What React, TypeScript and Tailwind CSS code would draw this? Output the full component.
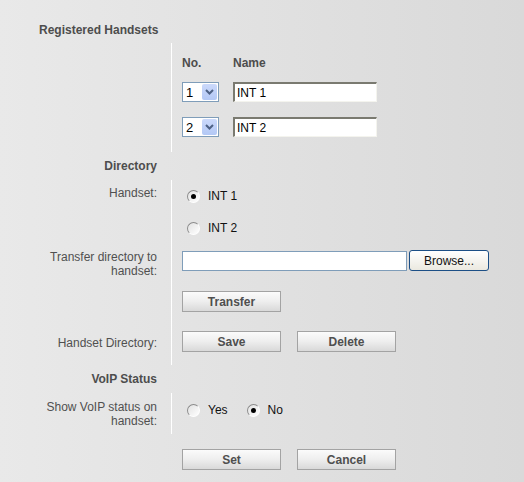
import React from 'react';

const FONT = { fontFamily: '"Liberation Sans", Arial, sans-serif' };

function Divider({ children, className = '' }: { children?: React.ReactNode; className?: string }) {
  return <div className={`border-l border-white pl-[10px] ${className}`}>{children}</div>;
}

function Btn({ label }: { label: string }) {
  return (
    <button className="h-[21px] w-[99px] border border-[#a3a3a3] bg-linear-to-b from-[#fbfbfb] via-[#eeeeee] to-[#d9d9d9] text-[12px] font-bold leading-none text-[#4f4f4f]">
      {label}
    </button>
  );
}

function Radio({ checked }: { checked?: boolean }) {
  return (
    <span className="flex h-[13px] w-[13px] items-center justify-center rounded-full border border-t-[#8c8c8c] border-l-[#8c8c8c] border-b-white border-r-white bg-linear-to-br from-[#e2e2e2] to-white">
      {checked && <span className="h-[5px] w-[5px] rounded-full bg-black" />}
    </span>
  );
}

function NoSelect({ value }: { value: string }) {
  return (
    <div className="flex h-[20px] w-[37px] items-center justify-between border border-[#7f9db9] bg-white pl-[3px] pr-[1px]">
      <span className="text-[13px] leading-none text-black">{value}</span>
      <span className="flex h-[16px] w-[15px] items-center justify-center rounded-[2px] bg-linear-to-b from-[#cbd9fb] to-[#b3c8f5]">
        <svg width="9" height="6" viewBox="0 0 9 6">
          <path d="M1 1 L4.5 4.5 L8 1" fill="none" stroke="#4d6185" strokeWidth="2" />
        </svg>
      </span>
    </div>
  );
}

function NameInput({ value }: { value: string }) {
  return (
    <div className="flex h-[20px] w-[144px] items-center border-t-2 border-l-2 border-b border-r border-t-[#7a7a70] border-l-[#7a7a70] border-b-[#f4f4ee] border-r-[#f4f4ee] bg-white pl-[2px] text-[12px] text-black">
      {value}
    </div>
  );
}

const rows = [
  { no: '1', name: 'INT 1' },
  { no: '2', name: 'INT 2' },
];

export default function App() {
  return (
    <div className="min-h-[482px] w-[524px] bg-linear-to-r from-[#e9e9e9] to-[#d9d9d9] text-[12px] text-[#505050]" style={FONT}>
      <div className="pt-[23px] pl-[39px] font-bold text-[#4d4d4d] leading-[14px]">Registered Handsets</div>

      <div className="mt-[6px] grid grid-cols-[171px_1fr]">
        {/* Registered handsets */}
        <div />
        <Divider className="pt-[13px] pb-[15px]">
          <div className="flex h-[14px] items-center font-bold leading-[14px] text-[#4d4d4d]">
            <span className="w-[51px]">No.</span>
            <span>Name</span>
          </div>
          <div className="mt-[12px] flex flex-col gap-[15px]">
            {rows.map(r => (
              <div key={r.no} className="flex items-center gap-[14px]">
                <NoSelect value={r.no} />
                <NameInput value={r.name} />
              </div>
            ))}
          </div>
        </Divider>

        {/* Directory */}
        <div className="flex h-[28px] items-center justify-end pr-[14px] font-bold text-[#4d4d4d]">Directory</div>
        <div />

        <div className="pt-[6px] pr-[14px] text-right leading-[14px]">Handset:</div>
        <Divider className="flex h-[32px] items-center">
          <span className="ml-[5px]"><Radio checked /></span>
          <span className="ml-[8px] text-[#111]">INT 1</span>
        </Divider>

        <div />
        <Divider className="flex h-[32px] items-center">
          <span className="ml-[5px]"><Radio /></span>
          <span className="ml-[8px] text-[#111]">INT 2</span>
        </Divider>

        <div className="pt-[6px] pr-[14px] pb-[4px] text-right leading-[14px]">
          Transfer directory to
          <br />
          handset:
        </div>
        <Divider className="pt-[6px]">
          <div className="flex items-center gap-[2px]">
            <div className="h-[20px] w-[225px] border border-[#7f9db9] bg-white" />
            <button className="h-[21px] w-[80px] rounded-[3px] border border-[#1c4f86] bg-linear-to-b from-white to-[#ebe9e0] text-[12px] leading-none text-[#111]">
              Browse...
            </button>
          </div>
        </Divider>

        <div />
        <Divider className="pt-[9px]">
          <Btn label="Transfer" />
        </Divider>

        <div className="pt-[24px] pr-[14px] text-right leading-[14px]">Handset Directory:</div>
        <Divider className="flex gap-[16px] pt-[19px] pb-[13px]">
          <Btn label="Save" />
          <Btn label="Delete" />
        </Divider>

        {/* VoIP */}
        <div className="flex h-[28px] items-center justify-end pr-[14px] font-bold text-[#4d4d4d]">VoIP Status</div>
        <div />

        <div className="pt-[7px] pr-[14px] pb-[6px] text-right leading-[14px]">
          Show VoIP status on
          <br />
          handset:
        </div>
        <Divider className="flex items-start pt-[10px]">
          <div className="flex h-[14px] items-center">
            <span className="ml-[5px]"><Radio /></span>
            <span className="ml-[8px] text-[#111]">Yes</span>
            <span className="ml-[19px]"><Radio checked /></span>
            <span className="ml-[8px] text-[#111]">No</span>
          </div>
        </Divider>

        <div />
        <div className="flex gap-[16px] pt-[15px] pl-[11px]">
          <Btn label="Set" />
          <Btn label="Cancel" />
        </div>
      </div>
    </div>
  );
}
